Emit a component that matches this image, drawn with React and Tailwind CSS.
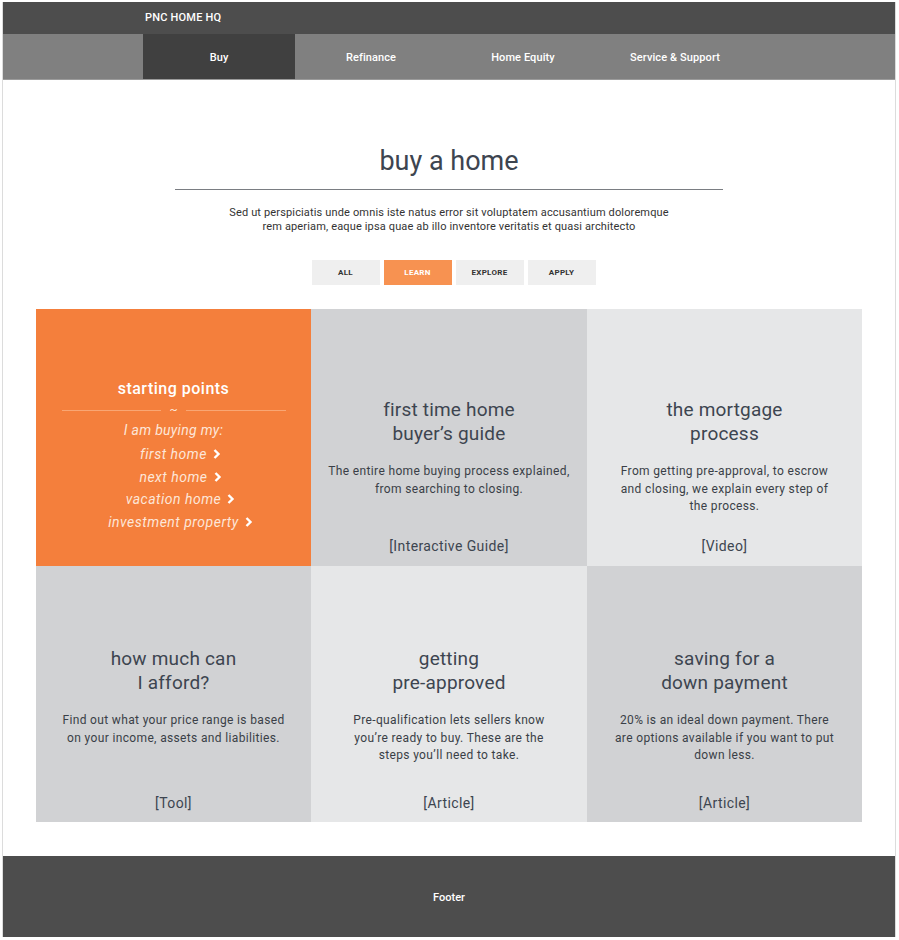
import React from "react";

const navItems = ["Buy", "Refinance", "Home Equity", "Service & Support"];
const filters = ["ALL", "LEARN", "EXPLORE", "APPLY"];
const startLinks = ["first home", "next home", "vacation home", "investment property"];

const cards = [
  {
    title: ["first time home", "buyer’s guide"],
    text: ["The entire home buying process explained,", "from searching to closing."],
    label: "[Interactive Guide]",
    bg: "bg-[#d1d2d4]",
  },
  {
    title: ["the mortgage", "process"],
    text: ["From getting pre-approval, to escrow", "and closing, we explain every step of", "the process."],
    label: "[Video]",
    bg: "bg-[#e6e7e8]",
  },
  {
    title: ["how much can", "I afford?"],
    text: ["Find out what your price range is based", "on your income, assets and liabilities."],
    label: "[Tool]",
    bg: "bg-[#d1d2d4]",
  },
  {
    title: ["getting", "pre-approved"],
    text: ["Pre-qualification lets sellers know", "you’re ready to buy. These are the", "steps you’ll need to take."],
    label: "[Article]",
    bg: "bg-[#e6e7e8]",
  },
  {
    title: ["saving for a", "down payment"],
    text: ["20% is an ideal down payment. There", "are options available if you want to put", "down less."],
    label: "[Article]",
    bg: "bg-[#d1d2d4]",
  },
];

function Chevron() {
  return (
    <svg width="8" height="11" viewBox="0 0 8 11" className="absolute left-full top-1/2 -translate-y-1/2 ml-[6px]">
      <path d="M1.5 1.5 L5.5 5.5 L1.5 9.5" fill="none" stroke="white" strokeWidth="2.4" />
    </svg>
  );
}

function StartingPoints() {
  return (
    <div className="h-[257px] bg-[#f47f3c] flex flex-col items-center pt-[70px] text-white">
      <h3 className="text-[16px] leading-[20px] font-medium tracking-[0.5px]">starting points</h3>
      <div className="flex items-center w-[224px] mt-[2px] h-[18px]">
        <div className="flex-1 h-px bg-[#f9a673]"></div>
        <span className="px-[8px] text-[12px] leading-none text-[#fde3d2]">~</span>
        <div className="flex-1 h-px bg-[#f9a673]"></div>
      </div>
      <p className="italic text-[14px] leading-[22px] text-[#fde6d8] tracking-[0.3px]">I am buying my:</p>
      <ul className="flex flex-col items-center mt-[2px]">
        {startLinks.map((link) => (
          <li key={link} className="italic text-[14px] leading-[22.5px] text-[#fde6d8] tracking-[0.5px]">
            <span className="relative">
              {link}
              <Chevron />
            </span>
          </li>
        ))}
      </ul>
    </div>
  );
}

function InfoCard({ card, top }) {
  return (
    <div className={`${card.bg} flex flex-col items-center text-center ${top ? "h-[257px] pt-[89px] pb-[11px]" : "h-[256px] pt-[81px] pb-[10px]"}`}>
      <h3 className="text-[19px] leading-[24px] text-[#3d4550] tracking-[0.2px]">
        {card.title.map((t) => (
          <span key={t} className="block">{t}</span>
        ))}
      </h3>
      <p className="mt-[17px] text-[12px] leading-[17.5px] text-[#3a3f47] tracking-[0.35px]">
        {card.text.map((t) => (
          <span key={t} className="block">{t}</span>
        ))}
      </p>
      <p className="mt-auto text-[14px] leading-[18px] text-[#3d4550] tracking-[0.4px]">{card.label}</p>
    </div>
  );
}

export default function App() {
  return (
    <div className="min-h-screen bg-white pl-[2px] pt-[2px]" style={{ fontFamily: "Roboto, 'Open Sans', sans-serif" }}>
      <div className="w-[894px] border-x border-[#dcdcdc]">
        <header className="h-[32px] bg-[#4d4d4d] flex items-center pl-[142px]">
          <span className="text-white text-[11px] font-medium tracking-[0.2px]">PNC HOME HQ</span>
        </header>
        <nav className="h-[46px] bg-[#808080] border-b border-[#9b9b9b] flex pl-[140px]">
          {navItems.map((item, i) => (
            <div
              key={item}
              className={`w-[152px] flex items-center justify-center pt-[4px] text-white text-[11px] font-medium tracking-[0.1px] ${i === 0 ? "bg-[#404040]" : ""}`}
            >
              {item}
            </div>
          ))}
        </nav>

        <main className="flex flex-col items-center pt-[65px]">
          <h1 className="text-[27px] leading-[32px] text-[#3d4550]">buy a home</h1>
          <div className="w-[548px] h-px bg-[#7a7d82] mt-[12px]"></div>
          <p className="mt-[16px] text-[11px] leading-[14px] text-[#333] text-center tracking-[0.15px]">
            Sed ut perspiciatis unde omnis iste natus error sit voluptatem accusantium doloremque
            <br />
            rem aperiam, eaque ipsa quae ab illo inventore veritatis et quasi architecto
          </p>
          <div className="flex gap-[4px] mt-[26px] ml-[9px]">
            {filters.map((f) => (
              <button
                key={f}
                className={`w-[68px] h-[25px] text-[8px] font-bold tracking-[0.3px] ${f === "LEARN" ? "bg-[#f79251] text-white" : "bg-[#efefef] text-[#333]"}`}
              >
                {f}
              </button>
            ))}
          </div>
        </main>

        <section className="ml-[33px] mt-[24px] w-[826px] grid grid-cols-[275px_276px_275px]">
          <StartingPoints />
          <InfoCard card={cards[0]} top />
          <InfoCard card={cards[1]} top />
          <InfoCard card={cards[2]} />
          <InfoCard card={cards[3]} />
          <InfoCard card={cards[4]} />
        </section>

        <footer className="mt-[34px] h-[81px] bg-[#4d4d4d] flex items-center justify-center pt-[4px]">
          <span className="text-white text-[11px] font-medium">Footer</span>
        </footer>
      </div>
    </div>
  );
}
